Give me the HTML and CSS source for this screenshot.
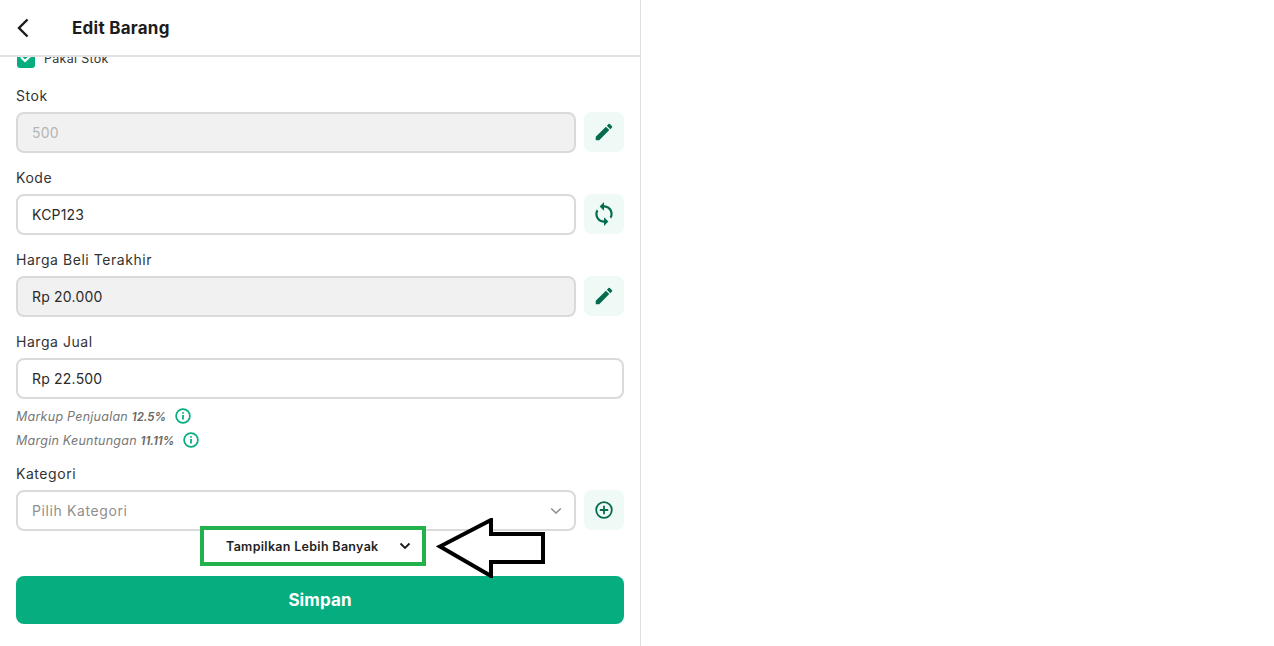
FILE: index.html
```html
<!DOCTYPE html>
<html lang="id">
<head>
  <meta charset="UTF-8" />
  <meta name="viewport" content="width=device-width, initial-scale=1.0"/>
  <title>Edit Barang</title>
  <link rel="stylesheet" href="styles.css">
</head>
<body>
  <div class="panel">
    <div class="header">
      <svg class="back" width="14" height="20" viewBox="0 0 14 20"><path d="M11.5 1.500 3 10l8.500 8.500" fill="none" stroke="#1a1a1a" stroke-width="2.4"/></svg>
      <h1>Edit Barang</h1>
    </div>

    <div class="content">
      <div class="check-row">
        <span class="checkbox">
          <svg width="13" height="10" viewBox="0 0 13 10"><path d="M1 4 5 8l7-6.500" fill="none" stroke="#fff" stroke-width="2.200"/></svg>
        </span>
        <span>Pakai Stok</span>
      </div>

      <div class="field">
        <label>Stok</label>
        <div class="field-row">
          <div class="input disabled muted">500</div>
          <div class="icon-btn">
            <svg width="22" height="22" viewBox="0 0 24 24"><path class="ico" d="M3 17.250V21h3.750L17.810 9.940l-3.750-3.750L3 17.250zM20.710 7.040a1 1 0 0 0 0-1.410l-2.340-2.340a1 1 0 0 0-1.410 0l-1.830 1.830 3.750 3.750 1.830-1.830z"/></svg>
          </div>
        </div>
      </div>

      <div class="field">
        <label>Kode</label>
        <div class="field-row">
          <div class="input">KCP123</div>
          <div class="icon-btn">
            <svg width="26" height="26" viewBox="0 0 24 24"><path class="ico" d="M12 4V1L8 5l4 4V6c3.310 0 6 2.690 6 6 0 1.010-.250 1.970-.700 2.800l1.460 1.460A7.930 7.930 0 0 0 20 12c0-4.420-3.580-8-8-8zm0 14c-3.310 0-6-2.690-6-6 0-1.010.250-1.970.700-2.800L5.240 7.740A7.930 7.930 0 0 0 4 12c0 4.420 3.580 8 8 8v3l4-4-4-4v3z"/></svg>
          </div>
        </div>
      </div>

      <div class="field">
        <label>Harga Beli Terakhir</label>
        <div class="field-row">
          <div class="input disabled">Rp 20.000</div>
          <div class="icon-btn">
            <svg width="22" height="22" viewBox="0 0 24 24"><path class="ico" d="M3 17.250V21h3.750L17.810 9.940l-3.750-3.750L3 17.250zM20.710 7.040a1 1 0 0 0 0-1.410l-2.340-2.340a1 1 0 0 0-1.410 0l-1.830 1.830 3.750 3.750 1.830-1.830z"/></svg>
          </div>
        </div>
      </div>

      <div class="field">
        <label>Harga Jual</label>
        <div class="field-row">
          <div class="input">Rp 22.500</div>
        </div>
        <div class="note">
          <span>Markup Penjualan <b>12.5%</b></span>
          <svg width="16" height="16" viewBox="0 0 16 16"><circle cx="8" cy="8" r="6.900" fill="none" stroke="#06ae7f" stroke-width="1.700"/><path d="M8 7v4.400M8 4.200v1.600" stroke="#06ae7f" stroke-width="1.800"/></svg>
        </div>
        <div class="note">
          <span>Margin Keuntungan <b>11.11%</b></span>
          <svg width="16" height="16" viewBox="0 0 16 16"><circle cx="8" cy="8" r="6.900" fill="none" stroke="#06ae7f" stroke-width="1.700"/><path d="M8 7v4.400M8 4.200v1.600" stroke="#06ae7f" stroke-width="1.800"/></svg>
        </div>
      </div>

      <div class="field kategori">
        <label>Kategori</label>
        <div class="field-row">
          <div class="input select muted-dark">
            <span>Pilih Kategori</span>
            <svg width="12" height="8" viewBox="0 0 12 8"><path d="M1.200 1.500 6 6l4.800-4.500" fill="none" stroke="#8c8c8c" stroke-width="1.500"/></svg>
          </div>
          <div class="icon-btn">
            <svg width="18" height="18" viewBox="0 0 18 18"><circle cx="9" cy="9" r="7.800" fill="none" stroke="#056b4f" stroke-width="1.800"/><path d="M9 4.800v8.400M4.800 9h8.400" stroke="#056b4f" stroke-width="1.800"/></svg>
          </div>
        </div>
      </div>

      <div class="more-row">
        <div class="more-btn">
          <span>Tampilkan Lebih Banyak</span>
          <svg width="12" height="8" viewBox="0 0 12 8"><path d="M1.500 1.500 6 6l4.500-4.500" fill="none" stroke="#1a1a1a" stroke-width="1.800"/></svg>
        </div>
      </div>

      <button class="save-btn">Simpan</button>
    </div>
  </div>

  <!-- panah penanda -->
  <svg class="arrow" width="112" height="60" viewBox="0 0 112 60"><path d="M4 28.500 55 2v14h52v28H55v14z" fill="#fff" stroke="#000" stroke-width="4"/></svg>
</body>
</html>
```

FILE: styles.css
```css
* {
  margin: 0;
  padding: 0;
  box-sizing: border-box;
}

html, body {
  height: 100%;
  overflow: hidden;
  font-family: 'Inter', 'Noto Sans', sans-serif;
  background: #fff;
  color: #1f1f1f;
}

.panel {
  width: 641px;
  height: 646px;
  border-right: 1px solid #e0e0e0;
  display: flex;
  flex-direction: column;
}

/* Header */
.header {
  height: 57px;
  flex-shrink: 0;
  display: flex;
  align-items: center;
  padding-left: 16px;
  border-bottom: 2px solid #e2e2e2;
  background: #fff;
  position: relative;
  z-index: 1;
}

.header .back {
  margin-right: 42px;
}

.header h1 {
  font-size: 17px;
  font-weight: 700;
  letter-spacing: 0.25px;
  color: #1c1c1c;
}

/* Form */
.content {
  flex: 1;
  overflow: hidden;
  padding: 0 16px;
}

.check-row {
  display: flex;
  align-items: center;
  gap: 9px;
  height: 20px;
  margin-top: -9px;
  padding-left: 1px;
  font-size: 12.5px;
  letter-spacing: 0.3px;
  color: #333;
}

.checkbox {
  width: 18px;
  height: 19px;
  border-radius: 3px;
  background: #06ae7f;
  display: flex;
  align-items: center;
  justify-content: center;
}

.field {
  margin-top: 15px;
}

.check-row + .field {
  margin-top: 18px;
}

.field label {
  display: block;
  font-size: 14px;
  line-height: 20px;
  margin-bottom: 6px;
  color: #333;
  letter-spacing: 0.55px;
}

.field-row {
  display: flex;
  gap: 8px;
}

.input {
  flex: 1;
  height: 41px;
  border: 2px solid #dadada;
  border-radius: 8px;
  padding: 0 14px;
  display: flex;
  align-items: center;
  font-size: 14px;
  letter-spacing: 0.2px;
  color: #2a2a2a;
}

.disabled {
  background: #f1f1f1;
}

.muted {
  color: #b5b5b5;
}

.muted-dark {
  color: #8f8f8f;
  letter-spacing: 0.6px;
}

.select {
  justify-content: space-between;
  padding-right: 12px;
}

.icon-btn {
  width: 40px;
  height: 40px;
  border-radius: 8px;
  background: #eff9f5;
  display: flex;
  align-items: center;
  justify-content: center;
}

.ico {
  fill: #056b4f;
}

.note {
  display: flex;
  align-items: center;
  gap: 9px;
  height: 24px;
  font-size: 12.5px;
  font-style: italic;
  letter-spacing: 0.25px;
  color: #777;
}

.field-row + .note {
  margin-top: 5px;
}

.note b {
  font-size: 11.5px;
  font-weight: 600;
  letter-spacing: 0;
  color: #666;
}

.kategori {
  margin-top: 12px;
}

.more-row {
  margin-top: -5px;
  margin-left: 184px;
  position: relative;
}

.more-btn {
  width: 226px;
  height: 40px;
  border: 4px solid #22b14c;
  background: #fff;
  display: flex;
  align-items: center;
  padding-left: 22px;
  gap: 20px;
  font-size: 12.5px;
  font-weight: 600;
  letter-spacing: 0.3px;
  color: #1f1f1f;
}

.save-btn {
  display: block;
  width: 100%;
  height: 48px;
  margin-top: 10px;
  border: none;
  border-radius: 8px;
  background: #06ae7f;
  color: #fff;
  font-family: inherit;
  font-size: 17px;
  font-weight: 700;
  letter-spacing: 0.1px;
}

.arrow {
  position: absolute;
  left: 436px;
  top: 518px;
}
```
